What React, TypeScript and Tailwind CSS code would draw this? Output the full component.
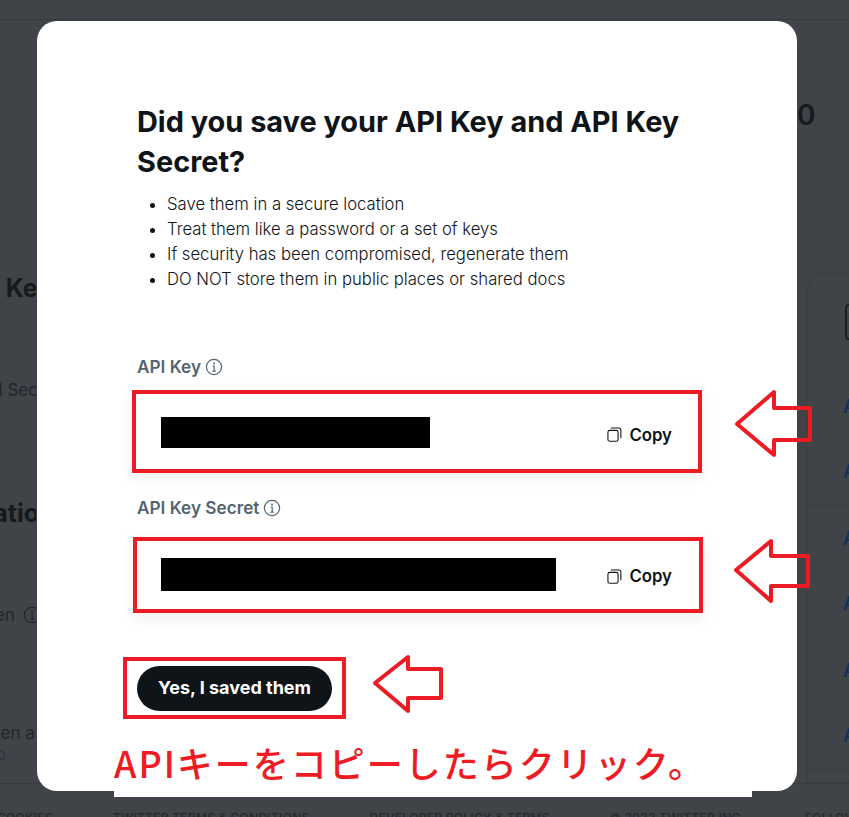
import React from "react";

const RED = "#ed1c24";

function InfoIcon({ className }: { className: string }) {
  return (
    <svg viewBox="0 0 18 18" className={className} fill="none" stroke="currentColor">
      <circle cx="9" cy="9" r="7.6" strokeWidth="1.2" />
      <circle cx="9" cy="5.4" r="1" fill="currentColor" stroke="none" />
      <path d="M7.6 8h1.6v5M7.4 13.2h3.4" strokeWidth="1.2" />
    </svg>
  );
}

function CopyIcon() {
  return (
    <svg viewBox="0 0 16 16" className="w-[15px] h-[15px] shrink-0 text-[#0f1419]" fill="none" stroke="currentColor" strokeWidth="1.15">
      <rect x="1" y="3.6" width="10.8" height="11.6" rx="2" />
      <path d="M4 1h8.8a2 2 0 0 1 2 2v9" />
    </svg>
  );
}

function Arrow({ className, points, w, h }: { className: string; points: string; w: number; h: number }) {
  return (
    <svg viewBox={`0 0 ${w} ${h}`} width={w} height={h} className={className} fill="none" stroke={RED} strokeWidth="4" strokeLinejoin="round">
      <polygon points={points} />
    </svg>
  );
}

function KeyRow({ box, bar, copy }: { box: string; bar: string; copy: string }) {
  return (
    <div className={`flex items-center justify-between border-4 border-[#ed1c24] bg-white shadow-[0_4px_14px_rgba(15,20,25,0.08)] ${box}`}>
      <div className={`bg-black ${bar}`} />
      <div className={`flex items-center gap-[7px] text-[16.8px] font-semibold leading-5 text-[#0f1419] ${copy}`}>
        <CopyIcon />
        <span>Copy</span>
      </div>
    </div>
  );
}

function Label({ text }: { text: string }) {
  return (
    <div className="flex items-center gap-1 h-5 text-[17.2px] font-semibold leading-5 text-[#536471]">
      <span>{text}</span>
      <InfoIcon className="w-[18px] h-[18px] font-normal" />
    </div>
  );
}

function Background() {
  const rows = [0, 1, 2, 3, 4, 5];
  return (
    <div className="flex flex-col h-full">
      <div className="h-5 shrink-0 border-b border-[#36393d]" />
      <div className="flex flex-1 min-h-0 relative">
        <div className="w-[36px] shrink-0 relative overflow-hidden text-[#16191d] whitespace-nowrap">
          <div className="flex flex-col items-start ml-[-37px] w-[180px]">
            <div className="mt-[252px] ml-[-5px] h-[32px] text-[25px] font-bold leading-8">API Key</div>
            <div className="mt-[74px] ml-[-57px] h-6 text-[17px] leading-6 text-[#22262a]">API Key and Secret</div>
            <div className="mt-[95px] ml-[-90px] h-8 text-[25px] font-bold leading-8">Authentication</div>
            <div className="mt-[74px] ml-[-55px] h-6 text-[17px] leading-6 flex items-center gap-2 text-[#22262a]">
              <span>Bearer Token</span>
              <InfoIcon className="w-[18px] h-[18px]" />
            </div>
            <div className="mt-[94px] ml-[-55px] h-6 text-[17px] leading-6 text-[#22262a]">Access Token and</div>
            <div className="mt-[2px] ml-[22px] h-4 text-[13px] leading-4 text-[#2e3135]">@0</div>
          </div>
        </div>
        <div className="flex-1" />
        <div className="w-[52px] shrink-0 overflow-hidden flex flex-col">
          <div className="mt-[79px] h-8 text-[28px] font-semibold leading-8 text-[#16191d]">0</div>
          <div className="mt-[141px] flex-1 ml-[10px] w-[60px] rounded-tl-2xl border border-[#3b3e42] border-r-0 bg-[#404347] flex flex-col">
            <div className="h-[100px] shrink-0 border-b border-[#3b3e42] flex items-start pl-[37px] pt-[31px]">
              <div className="w-8 h-[36px] shrink-0 border-2 border-[#1c1e21] rounded-sm" />
            </div>
            {rows.map((r) => (
              <div
                key={r}
                className={`h-[66px] shrink-0 flex items-center pl-[35px] text-[18px] font-semibold text-[#143058] ${r % 2 === 1 ? "border-b border-[#3b3e42]" : ""}`}
              >
                A
              </div>
            ))}
          </div>
        </div>
      </div>
      <div className="h-[34px] shrink-0 border-t border-[#373a3e] flex items-start gap-[60px] pt-[26px] text-[12px] leading-4 tracking-wide font-medium whitespace-nowrap text-[#26292d] overflow-hidden">
        <span className="-ml-[3px]">COOKIES</span>
        <span>TWITTER TERMS &amp; CONDITIONS</span>
        <span>DEVELOPER POLICY &amp; TERMS</span>
        <span>© 2022 TWITTER INC.</span>
        <span>FOLLOW</span>
      </div>
    </div>
  );
}

export default function App() {
  return (
    <div
      className="relative w-[849px] h-[817px] overflow-hidden bg-[#404347]"
      style={{ fontFamily: "Inter, 'Noto Sans CJK JP', sans-serif" }}
    >
      <Background />

      {/* modal */}
      <div className="absolute left-[37px] top-[21px] w-[760px] h-[770px] rounded-[20px] bg-white pl-[100px] pt-[81px] flex flex-col items-start">
        <h1 className="w-[560px] text-[28.9px] font-bold leading-[40px] text-[#0f1419]">
          Did you save your API Key and API Key Secret?
        </h1>
        <ul className="mt-[10px] pl-[30px] list-disc text-[16.7px] leading-[25px] font-light text-[#0f1419] marker:text-[#0f1419]">
          <li>Save them in a secure location</li>
          <li>Treat them like a password or a set of keys</li>
          <li>If security has been compromised, regenerate them</li>
          <li>DO NOT store them in public places or shared docs</li>
        </ul>
        <div className="mt-[65px]">
          <Label text="API Key" />
        </div>
        <KeyRow box="mt-[13px] ml-[-5px] w-[570px] h-[83px] pl-[25px] pr-[26px]" bar="w-[269px] h-[31px] mt-[2px]" copy="pt-[6px]" />
        <div className="mt-[25px]">
          <Label text="API Key Secret" />
        </div>
        <KeyRow box="mt-[19px] ml-[-4px] w-[570px] h-[76px] pl-[24px] pr-[27px]" bar="w-[395px] h-[33px] mb-[1px]" copy="pt-[2px]" />
        <div className="mt-[44px] ml-[-14px] w-[223px] h-[62px] border-4 border-[#ed1c24] flex items-center pl-[10px]">
          <button className="w-[195px] h-[45px] pb-[2px] rounded-full bg-[#0f1419] text-white text-[18px] font-bold">
            Yes, I saved them
          </button>
        </div>
      </div>

      {/* white strip of the annotation */}
      <div className="absolute left-[114px] top-[735px] w-[638px] h-[62px] bg-white flex items-center pb-[8px]">
        <span
          className="text-[36px] font-medium leading-none tracking-[2px] whitespace-nowrap text-[#ed1c24]"
          style={{ fontFamily: "'Noto Sans CJK JP', sans-serif" }}
        >
          APIキーをコピーしたらクリック。
        </span>
      </div>

      {/* arrows */}
      <Arrow className="absolute left-[730px] top-[385px]" w={85} h={76} points="7,39 44,7 44,23 80,23 80,55 44,55 44,70" />
      <Arrow className="absolute left-[730px] top-[535px]" w={85} h={72} points="6,35 41,6 41,21 78,21 78,51 41,51 41,66" />
      <Arrow className="absolute left-[370px] top-[652px]" w={76} h={64} points="5,31 38,5 38,17 71,17 71,46 38,46 38,59" />
    </div>
  );
}
